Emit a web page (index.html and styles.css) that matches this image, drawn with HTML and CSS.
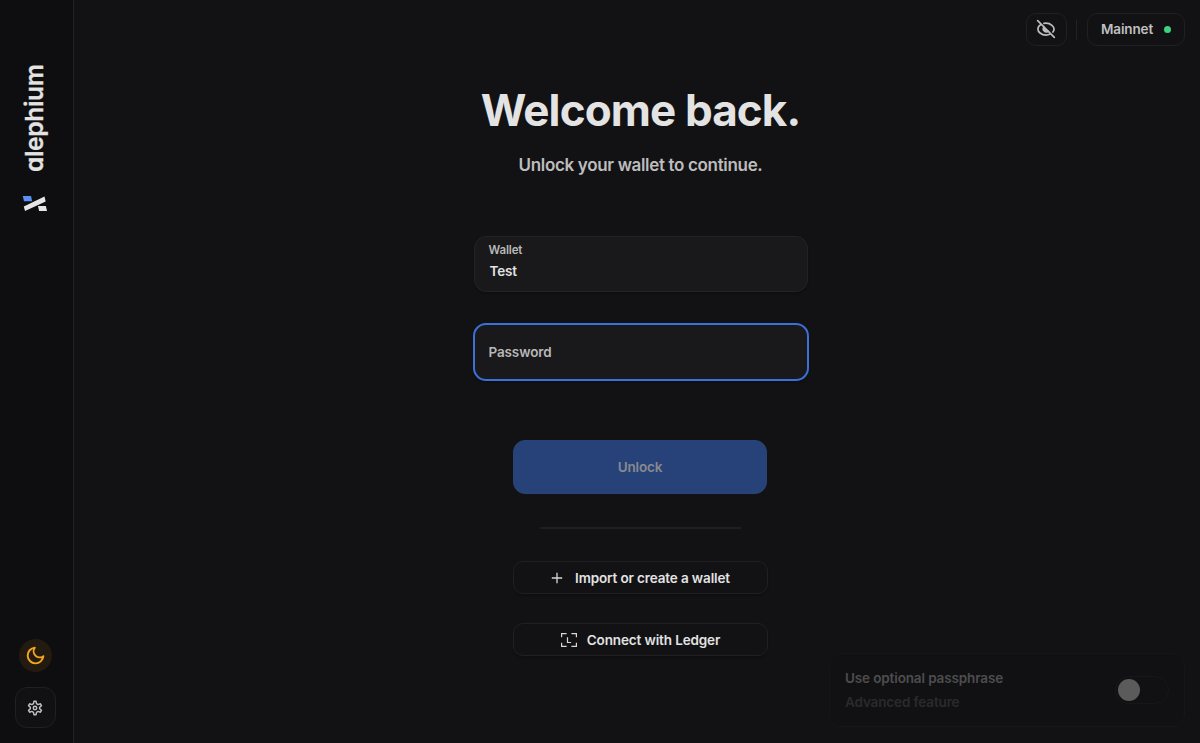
FILE: index.html
```
<!DOCTYPE html>
<html lang="en">
<head>
    <meta charset="UTF-8">
    <meta name="viewport" content="width=device-width, initial-scale=1.0">
    <title>Alephium Wallet</title>
    <link rel="stylesheet" href="styles.css">
</head>
<body>
    <aside class="sidebar">
        <div class="brand">
            <span class="brand-name">alephium</span>
            <svg class="brand-logo" width="26" height="17" viewBox="0 0 26 17">
                <path d="M.8 1h8.200l1.200 5.200H2z" fill="#5a8ff5"/>
                <path d="M1.800 11.500L22.500 1.600l1.200 4.900L3 16z" fill="#e6e6e6"/>
                <path d="M16 11h7.800l1.300 5.100h-8z" fill="#e6e6e6"/>
            </svg>
        </div>
        <div class="sidebar-actions">
            <button class="theme-btn" aria-label="Theme">
                <svg width="21" height="21" viewBox="0 0 24 24" fill="none" stroke="#f5a51d" stroke-width="2.200" stroke-linecap="round" stroke-linejoin="round">
                    <path d="M21 12.790A9 9 0 1 1 11.210 3 7 7 0 0 0 21 12.790z"/>
                </svg>
            </button>
            <button class="settings-btn" aria-label="Settings">
                <svg width="16" height="16" viewBox="0 0 24 24" fill="none" stroke="#c0c0c0" stroke-width="2.200" stroke-linejoin="round">
                    <path d="M9.700 5.500L10.400 2h3.200l.7 3.500 2.400 1.400 3.400-1.200 1.600 2.800-2.700 2.300v2.400l2.700 2.300-1.600 2.800-3.400-1.200-2.400 1.400-.7 3.500h-3.200l-.7-3.500-2.400-1.400-3.400 1.200-1.600-2.800L5 13.200v-2.400L2.300 8.500l1.600-2.800 3.400 1.200z"/>
                    <circle cx="12" cy="12" r="2.600"/>
                </svg>
            </button>
        </div>
    </aside>

    <main class="content">
        <header class="topbar">
            <button class="eye-btn" aria-label="Discreet mode">
                <svg width="20" height="20" viewBox="0 0 24 24" fill="none" stroke="#bdbdbd" stroke-width="2" stroke-linecap="round" stroke-linejoin="round">
                    <path d="M9.500 5.300A11 11 0 0 1 12 5c6 0 9.700 4.500 9.700 7.200a6 6 0 0 1-1.400 3.500"/>
                    <path d="M5.700 6.800C3.300 8.300 2.300 10.500 2.300 12.200 2.300 15 6 19.300 12 19.300c1.700 0 3.200-.3 4.500-.9"/>
                    <path d="M9.500 9.800a3.500 3.500 0 0 0 4.900 4.900z" fill="#bdbdbd" stroke="none"/>
                    <path d="M9.500 9.800a3.500 3.500 0 0 0 4.900 4.900"/>
                    <path d="M2 2l20 20"/>
                </svg>
            </button>
            <span class="divider"></span>
            <button class="network-btn">Mainnet <span class="dot"></span></button>
        </header>

        <form class="login">
            <h1>Welcome back.</h1>
            <p class="subtitle">Unlock your wallet to continue.</p>
            <div class="field">
                <span class="field-label">Wallet</span>
                <span class="field-value">Test</span>
            </div>
            <div class="field focused">
                <span class="placeholder">Password</span>
            </div>
            <button type="button" class="unlock-btn" disabled>Unlock</button>
            <div class="separator"></div>
            <button type="button" class="secondary-btn">
                <svg class="plus" width="12" height="12" viewBox="0 0 12 12" stroke="#d8d8d8" stroke-width="1.300">
                    <path d="M6 .8v10.400M.8 6h10.400"/>
                </svg>
                Import or create a wallet
            </button>
            <button type="button" class="secondary-btn">
                <svg class="ledger" width="16" height="14" viewBox="0 0 16 14" fill="none" stroke="#d8d8d8" stroke-width="1.200">
                    <path d="M.6 4.200V.6h5M10.400 .6h5v3.600M.6 9.800v3.600h5M10.400 13.400h5V9.800M6.500 4.200v5.300h3.600"/>
                </svg>
                Connect with Ledger
            </button>
        </form>

        <section class="passphrase">
            <div>
                <p class="passphrase-title">Use optional passphrase</p>
                <p class="passphrase-note">Advanced feature</p>
            </div>
            <span class="toggle"><span class="knob"></span></span>
        </section>
    </main>
</body>
</html>
```
FILE: styles.css
```
* {
    box-sizing: border-box;
}
body {
    margin: 0;
    display: flex;
    height: 100vh;
    overflow: hidden;
    background: #121214;
    color: #e3e3e3;
    font-family: Inter, sans-serif;
    font-size: 13.5px;
    font-weight: 600;
    letter-spacing: -0.13px;
}
button {
    display: flex;
    align-items: center;
    justify-content: center;
    padding: 0;
    background: none;
    border: 1px solid #202022;
    color: inherit;
    font: inherit;
    letter-spacing: inherit;
}
h1, p {
    margin: 0;
}
svg {
    display: block;
    flex-shrink: 0;
}
.sidebar {
    display: flex;
    flex-direction: column;
    justify-content: space-between;
    width: 74px;
    padding: 64px 3px 15px 0;
    background: #0e0e10;
    border-right: 1px solid #222224;
}
.brand {
    display: flex;
    flex-direction: column;
    align-items: center;
}
.brand-name {
    height: 108px;
    margin-right: 3px;
    line-height: 26px;
    writing-mode: vertical-rl;
    transform: rotate(180deg);
    font-size: 24.5px;
    font-weight: 600;
    letter-spacing: -0.3px;
    font-feature-settings: "cv11";
    white-space: nowrap;
    -webkit-text-stroke: 0.3px #e3e3e3;
}
.brand-logo {
    margin-top: 23px;
}
.sidebar-actions {
    display: flex;
    flex-direction: column;
    align-items: center;
    gap: 15px;
}
.theme-btn {
    width: 33px;
    height: 33px;
    border: none;
    border-radius: 50%;
    background: #231b0f;
}
.settings-btn {
    width: 41px;
    height: 41px;
    border-radius: 12px;
    background: #111113;
}
.content {
    flex: 1;
    display: flex;
    flex-direction: column;
    align-items: center;
}
.topbar {
    align-self: flex-end;
    display: flex;
    align-items: center;
    height: 33px;
    margin: 13px 15px 0 0;
}
.eye-btn {
    width: 41px;
    height: 33px;
    padding: 0 1px 1px 0;
    border-radius: 10px;
}
.divider {
    width: 1px;
    height: 20px;
    margin: 0 10px 0 9px;
    background: #222224;
}
.network-btn {
    width: 98px;
    height: 33px;
    padding-bottom: 1px;
    border-radius: 10px;
    color: #c0c0c0;
}
.dot {
    width: 7px;
    height: 7px;
    margin-left: 11px;
    border-radius: 50%;
    background: #3ed282;
}
.login {
    display: flex;
    flex-direction: column;
    align-items: center;
    margin: 39px 0 0 7px;
}
h1 {
    line-height: 50px;
    font-size: 44px;
    font-weight: 700;
    letter-spacing: -0.88px;
}
.subtitle {
    margin: 18px 0 59px;
    line-height: 24px;
    font-size: 17px;
    letter-spacing: -0.33px;
    color: #bdbdbd;
}
.field {
    display: flex;
    flex-direction: column;
    width: 334px;
    height: 56px;
    padding: 5px 14px;
    background: #19191b;
    border: 1px solid #232325;
    border-radius: 12px;
    box-shadow: 0 2px 2px rgba(0, 0, 0, 0.2);
}
.field-label {
    line-height: 16px;
    font-size: 11.5px;
    color: #b8b8b8;
}
.field-value {
    margin: 3px 0 0 1px;
    line-height: 20px;
}
.focused {
    justify-content: center;
    width: 336px;
    height: 58px;
    margin: 31px 0 59px;
    border: 2px solid #3b70d8;
    border-radius: 13px;
}
.placeholder {
    color: #b8b8b8;
}
.unlock-btn {
    width: 254px;
    height: 54px;
    margin-right: 1px;
    background: #274278;
    border-color: #2a4375;
    border-radius: 12px;
    color: #878a90;
}
.separator {
    width: 201px;
    height: 2px;
    margin: 33px 0 32px;
    background: #1f1f21;
}
.secondary-btn {
    width: 255px;
    height: 33px;
    margin-bottom: 29px;
    border-radius: 10px;
    box-shadow: 0 2px 2px rgba(0, 0, 0, 0.2);
}
.plus {
    margin-right: 12px;
}
.ledger {
    margin-right: 10px;
}
.passphrase {
    position: absolute;
    right: 15px;
    bottom: 16px;
    display: flex;
    align-items: center;
    justify-content: space-between;
    width: 356px;
    height: 74px;
    padding: 0 15px;
    background: #111113;
    border: 1px solid #161618;
    border-radius: 12px;
}
.passphrase-title {
    line-height: 24px;
    color: #4d4d4e;
}
.passphrase-note {
    line-height: 24px;
    color: #2a2a2c;
}
.toggle {
    display: flex;
    align-items: center;
    width: 54px;
    height: 28px;
    padding-left: 2px;
    border: 1px solid #171719;
    border-radius: 14px;
}
.knob {
    width: 22px;
    height: 22px;
    border-radius: 50%;
    background: #5b5b5b;
}
```
